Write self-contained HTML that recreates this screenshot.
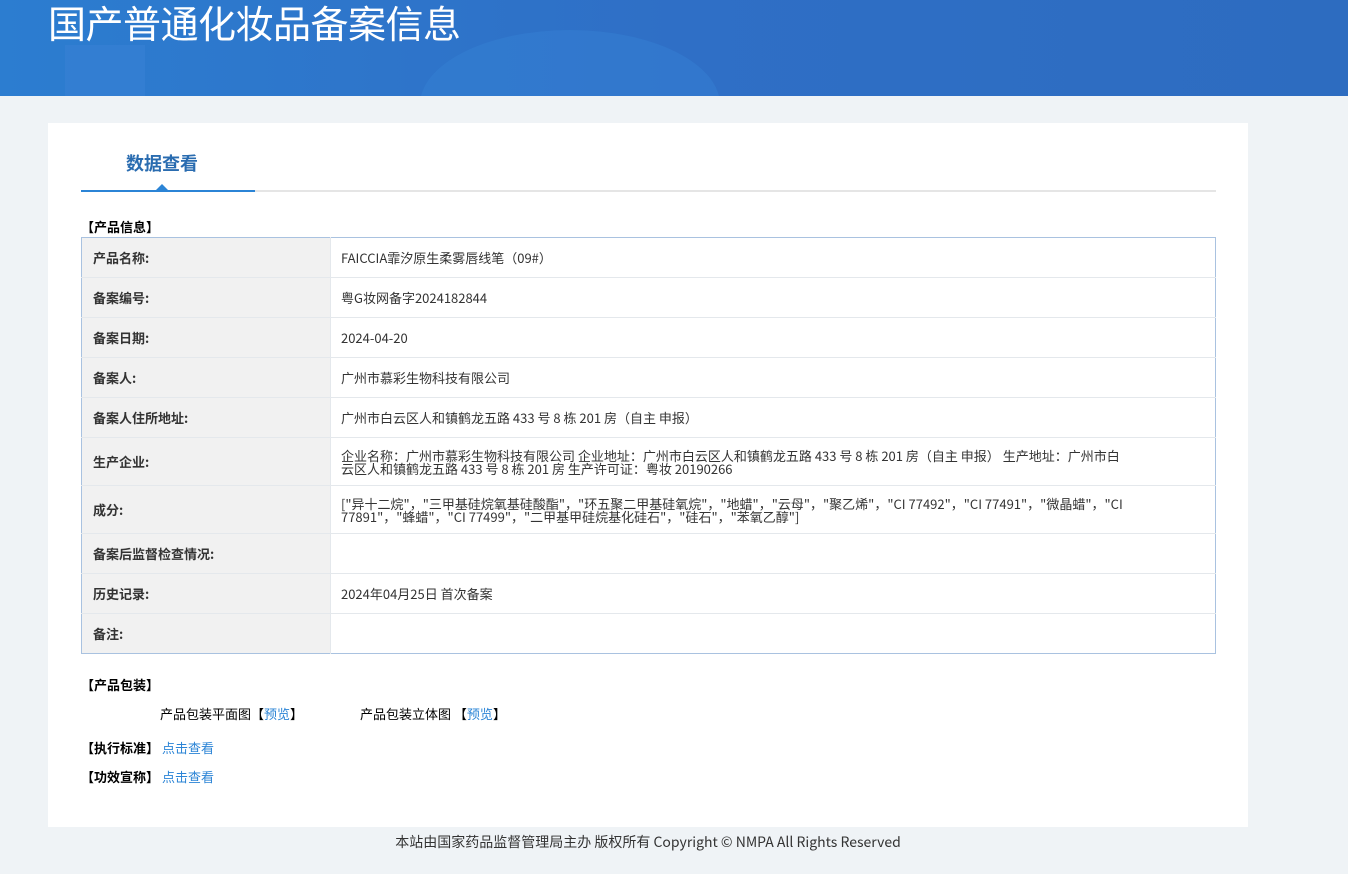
<!DOCTYPE html>
<html><head><meta charset="utf-8"><style>
*{margin:0;padding:0;box-sizing:border-box}
body{width:1348px;height:874px;background:#eff3f6;font-family:"Noto Sans CJK SC","Liberation Sans",sans-serif;font-size:13px;color:#333;position:relative;overflow:hidden}
.hdr{position:absolute;left:0;top:0;width:1348px;height:96px;background:linear-gradient(90deg,#2c7dd0 0%,#2f6fc6 50%,#2d6cc0 100%);overflow:hidden}
.hdr .b1{position:absolute;left:65px;top:45px;width:80px;height:51px;background:#3a82d6;opacity:.5}
.hdr .b2{position:absolute;left:420px;top:30px;width:300px;height:150px;border-radius:50%;background:#3785d6;opacity:.4}
.hdr h1{position:absolute;left:48px;top:-2px;font-size:38px;font-weight:normal;color:#fff;line-height:48px;font-family:"Noto Sans CJK SC",sans-serif;letter-spacing:-0.5px}
.card{position:absolute;left:48px;top:123px;width:1200px;height:704px;background:#fff}
.tab{position:absolute;left:78px;top:27px;font-size:18px;font-weight:bold;color:#2a6cb0}
.line{position:absolute;left:33px;top:67px;width:1135px;height:2px;background:#e5e5e5}
.line i{position:absolute;left:0;top:0;width:174px;height:2px;background:#2b84d6}
.tri{position:absolute;left:108px;top:61px;width:0;height:0;border-left:6px solid transparent;border-right:6px solid transparent;border-bottom:6px solid #2b84d6}
.sec{position:absolute;font-weight:bold;color:#000;font-size:13px;line-height:18px}
table{position:absolute;left:33px;top:114px;width:1135px;border-collapse:collapse;border:1px solid #a9c2e0}
td{border-bottom:1px solid #e4e8ec;height:40px;vertical-align:middle;font-size:13px}
td.l{width:249px;background:#f1f1f1;font-weight:bold;padding-left:11px;color:#333;border-right:1px solid #e4e8ec}
td.v{padding:0 40px 0 10px;line-height:13px;color:#333}
tr.t2 td{height:48px}
tr:last-child td{border-bottom:none}
.blue{color:#2b84d6}
.a{position:absolute;font-size:13px;color:#000;line-height:18px}
.foot{position:absolute;top:832px;left:0;width:1296px;text-align:center;font-size:14px;color:#333}
</style></head><body>
<div class="hdr"><div class="b1"></div><div class="b2"></div><h1>国产普通化妆品备案信息</h1></div>
<div class="card">
<div class="tab">数据查看</div>
<div class="line"><i></i></div><div class="tri"></div>
<div class="sec" style="left:33px;top:95px">【产品信息】</div>
<table>
<tr><td class="l">产品名称:</td><td class="v">FAICCIA霏汐原生柔雾唇线笔（09#）</td></tr>
<tr><td class="l">备案编号:</td><td class="v">粤G妆网备字2024182844</td></tr>
<tr><td class="l">备案日期:</td><td class="v">2024-04-20</td></tr>
<tr><td class="l">备案人:</td><td class="v">广州市慕彩生物科技有限公司</td></tr>
<tr><td class="l">备案人住所地址:</td><td class="v">广州市白云区人和镇鹤龙五路 433 号 8 栋 201 房（自主 申报）</td></tr>
<tr class="t2"><td class="l">生产企业:</td><td class="v">企业名称：广州市慕彩生物科技有限公司 企业地址：广州市白云区人和镇鹤龙五路 433 号 8 栋 201 房（自主 申报） 生产地址：广州市白<br>云区人和镇鹤龙五路 433 号 8 栋 201 房 生产许可证：粤妆 20190266</td></tr>
<tr class="t2"><td class="l">成分:</td><td class="v">["异十二烷"，"三甲基硅烷氧基硅酸酯"，"环五聚二甲基硅氧烷"，"地蜡"，"云母"，"聚乙烯"，"CI 77492"，"CI 77491"，"微晶蜡"，"CI<br>77891"，"蜂蜡"，"CI 77499"，"二甲基甲硅烷基化硅石"，"硅石"，"苯氧乙醇"]</td></tr>
<tr><td class="l">备案后监督检查情况:</td><td class="v"></td></tr>
<tr><td class="l">历史记录:</td><td class="v">2024年04月25日 首次备案</td></tr>
<tr><td class="l">备注:</td><td class="v"></td></tr>
</table>
<div class="sec" style="left:33px;top:553px">【产品包装】</div>
<div class="a" style="left:112px;top:582px">产品包装平面图【<span class="blue">预览</span>】</div>
<div class="a" style="left:312px;top:582px">产品包装立体图 【<span class="blue">预览</span>】</div>
<div class="sec" style="left:33px;top:616px">【执行标准】 <span class="blue" style="font-weight:normal">点击查看</span></div>
<div class="sec" style="left:33px;top:645px">【功效宣称】 <span class="blue" style="font-weight:normal">点击查看</span></div>
</div>
<div class="foot">本站由国家药品监督管理局主办 版权所有 Copyright © NMPA All Rights Reserved</div>
</body></html>
